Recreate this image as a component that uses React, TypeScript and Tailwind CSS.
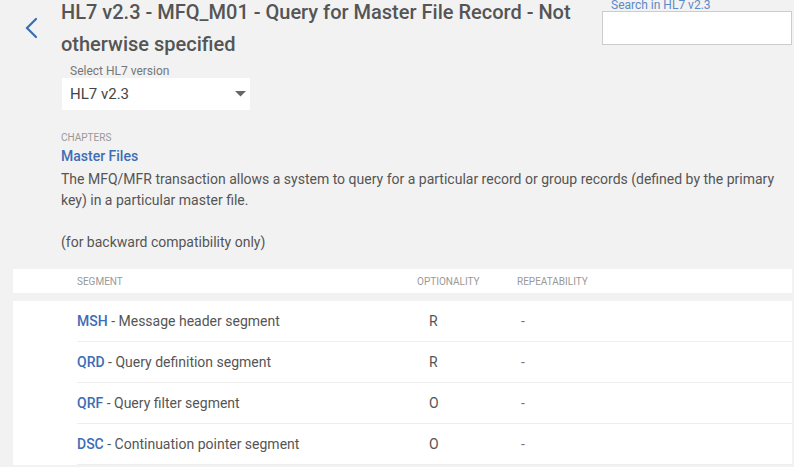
import React from "react";

const rows = [
  { code: "MSH", name: "Message header segment", opt: "R", rep: "-" },
  { code: "QRD", name: "Query definition segment", opt: "R", rep: "-" },
  { code: "QRF", name: "Query filter segment", opt: "O", rep: "-" },
  { code: "DSC", name: "Continuation pointer segment", opt: "O", rep: "-" },
];

export default function App() {
  return (
    <div
      className="w-[794px] h-[467px] overflow-hidden bg-[#f2f2f2] flex flex-col"
      style={{ fontFamily: "Roboto, 'Liberation Sans', sans-serif" }}
    >
      <div className="flex">
        <div className="w-[61px] shrink-0">
          <svg
            width="16"
            height="24"
            viewBox="0 0 16 24"
            className="ml-[23px] mt-[16px]"
          >
            <polyline
              points="13,3 4,12 13,21"
              fill="none"
              stroke="#3b6db3"
              strokeWidth="2.2"
              strokeLinecap="round"
              strokeLinejoin="miter"
            />
          </svg>
        </div>
        <div className="flex-1 flex flex-col pr-[2px]">
          <div className="flex">
            <div className="flex-1 min-w-0 flex flex-col">
              <h1 className="mt-[-4px] text-[20px] leading-[32px] font-medium text-[#555555]">
                HL7 v2.3 - MFQ_M01 - Query for Master File Record - Not otherwise specified
              </h1>
              <div className="mt-[4px] ml-[9px] text-[12px] leading-[14px] text-[#777777]">
                Select HL7 version
              </div>
              <div className="ml-[1px] w-[188px] h-[32px] bg-white flex items-center justify-between pl-[8px] pr-[4px]">
                <span className="text-[15px] text-[#444444]">HL7 v2.3</span>
                <svg width="11" height="6" viewBox="0 0 11 6">
                  <polygon points="0,0 11,0 5.5,5.5" fill="#666666" />
                </svg>
              </div>
            </div>
            <div className="w-[190px] ml-[8px] shrink-0 flex flex-col">
              <div className="mt-[-1px] ml-[9px] text-[12px] leading-[12px] text-[#5b8ac6]">
                Search in HL7 v2.3
              </div>
              <div className="h-[34px] bg-white border border-[#cccccc]" />
            </div>
          </div>
          <div className="mt-[22px] text-[10px] leading-[11px] text-[#999999]">CHAPTERS</div>
          <div className="mt-[3px] text-[14px] leading-[20px] font-medium text-[#3d6db5]">
            Master Files
          </div>
          <div className="mt-[3px] text-[14px] leading-[21px] text-[#555555]">
            <p>
              The MFQ/MFR transaction allows a system to query for a particular record or group
              records (defined by the primary key) in a particular master file.
            </p>
            <p className="h-[21px]"></p>
            <p>(for backward compatibility only)</p>
          </div>
        </div>
      </div>

      <div className="mt-[16px] ml-[13px] mr-[2px] flex flex-col">
        <div className="h-[24px] bg-white flex items-center pl-[64px] text-[10px] text-[#999999]">
          <div className="w-[340px]">SEGMENT</div>
          <div className="w-[100px]">OPTIONALITY</div>
          <div>REPEATABILITY</div>
        </div>
        <div className="mt-[8px] bg-white">
          {rows.map((r) => (
            <div
              key={r.code}
              className="ml-[64px] h-[41px] border-b border-[#eeeeee] flex items-center text-[14px] text-[#555555]"
            >
              <div className="w-[340px]">
                <span className="font-medium text-[#3d6db5]">{r.code}</span> - {r.name}
              </div>
              <div className="w-[100px] pl-[12px]">{r.opt}</div>
              <div className="pl-[4px] text-[#777777]">{r.rep}</div>
            </div>
          ))}
        </div>
      </div>
    </div>
  );
}
